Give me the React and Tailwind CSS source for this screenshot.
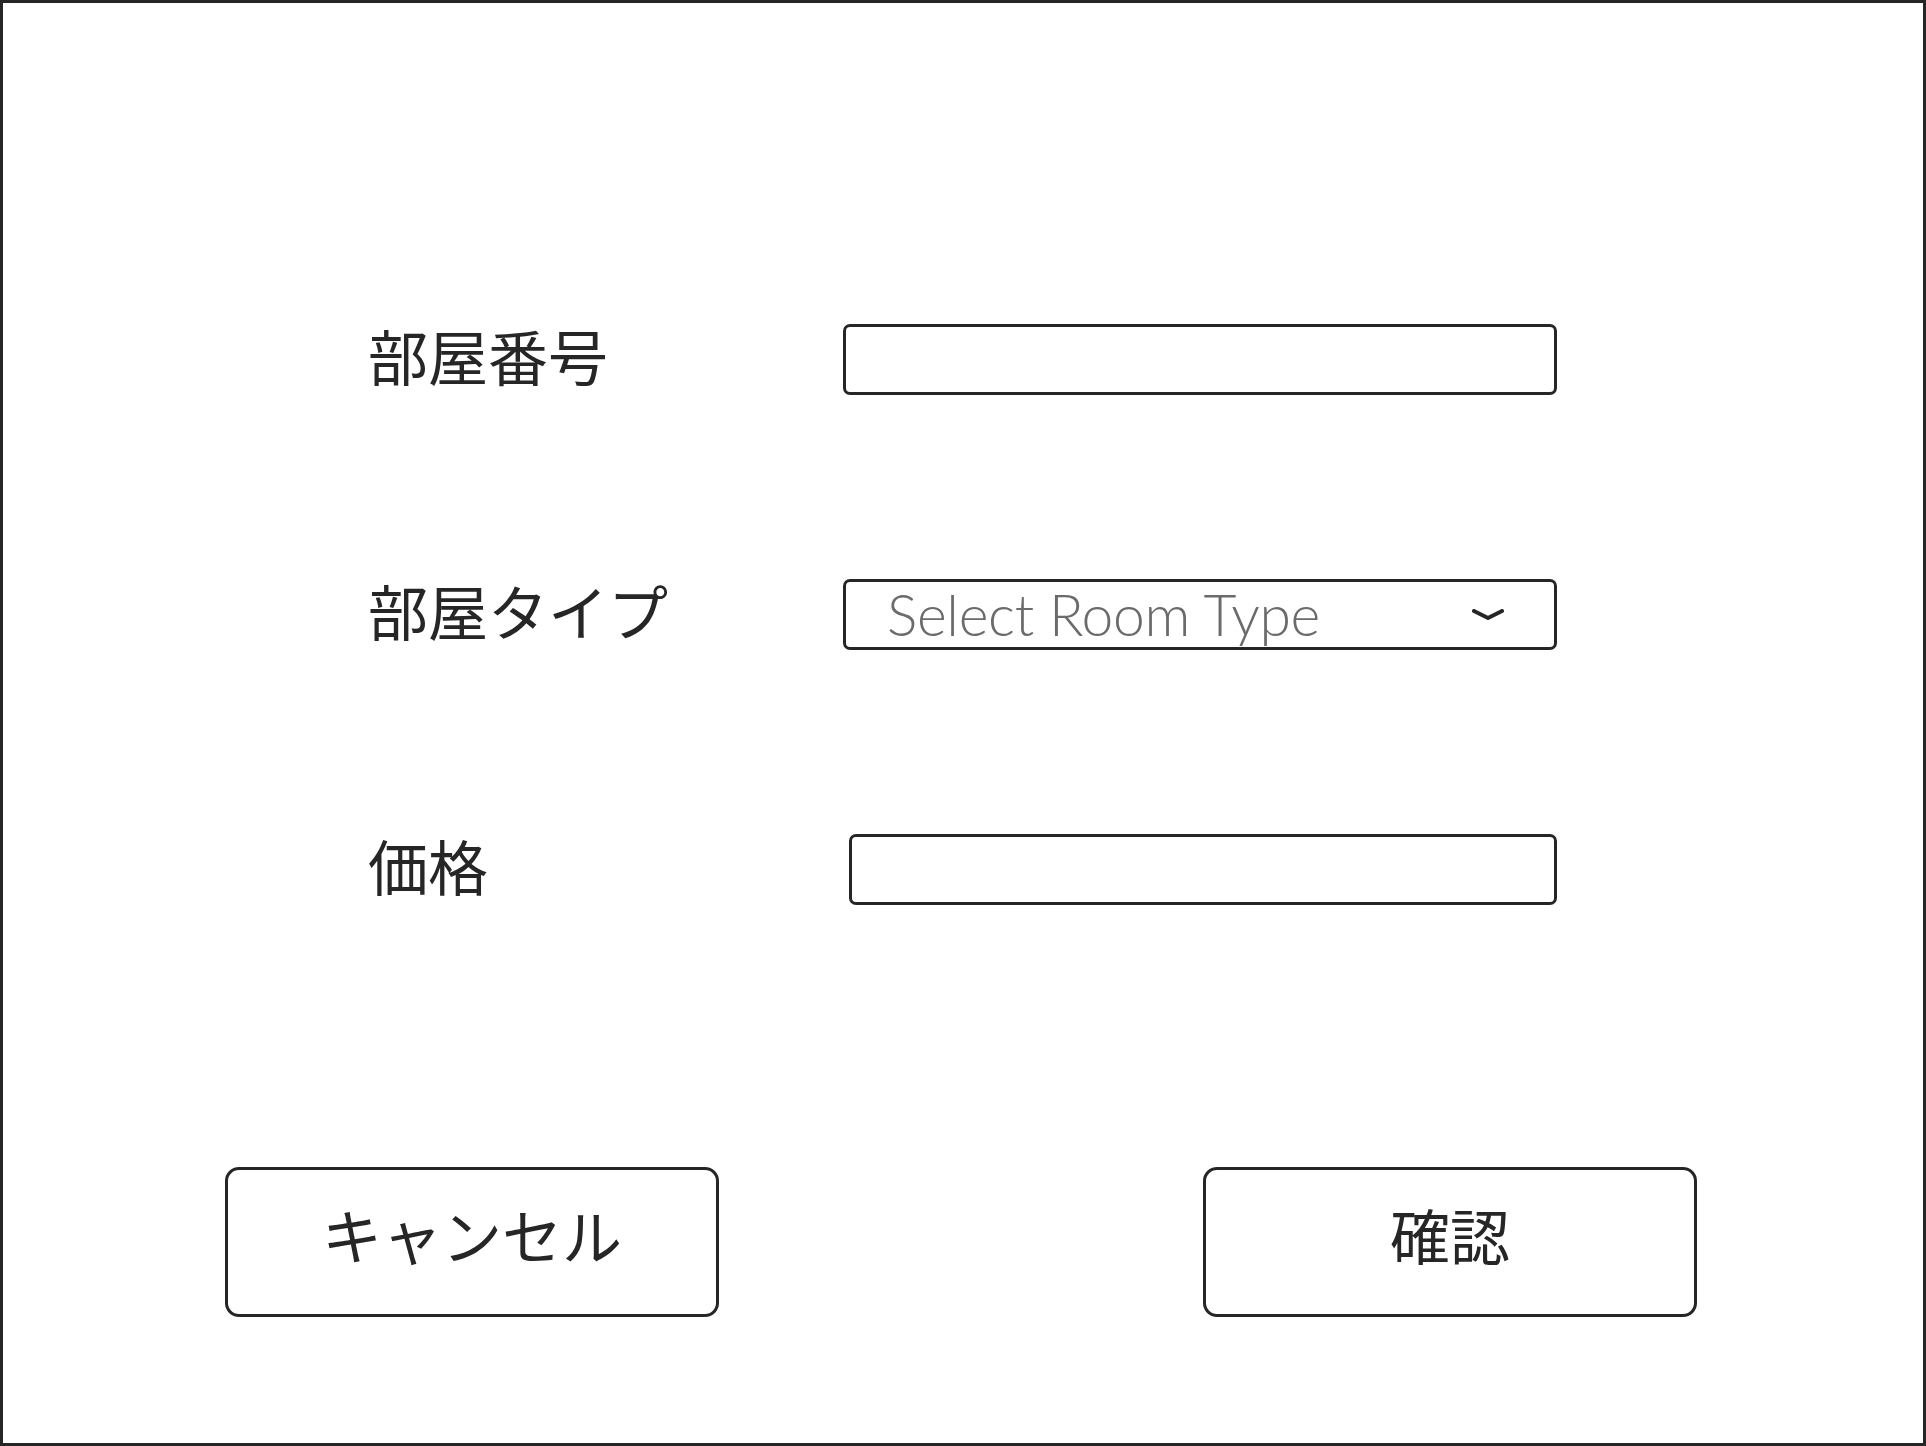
import { useState } from 'react';

const jp = { fontFamily: '"Noto Sans CJK JP", "Noto Sans", sans-serif' };

const Field = ({ label, children }) => (
  <div className="flex items-center h-[71px]">
    <div className="w-[475px] pb-[10px] text-[60px] leading-none text-[#262626]" style={jp}>
      {label}
    </div>
    {children}
  </div>
);

const App = () => {
  const [roomNo, setRoomNo] = useState('');
  const [price, setPrice] = useState('');

  return (
    <div className="w-[1926px] h-[1446px] border-[3px] border-[#262626] bg-white flex flex-col">
      <div className="pt-[321px] pl-[365px] flex flex-col gap-[184px]">
        <Field label="部屋番号">
          <input
            value={roomNo}
            onChange={(e) => setRoomNo(e.target.value)}
            className="w-[714px] h-[71px] border-[3px] border-[#262626] rounded-[7px] outline-none px-4"
          />
        </Field>

        <Field label="部屋タイプ">
          <button className="w-[714px] h-[71px] border-[3px] border-[#262626] rounded-[7px] flex items-center pl-[41px] pr-[50px] justify-between">
            <span
              className="text-[57px] font-light text-[#6b6b6b] leading-none tracking-[-0.3px]"
              style={{ fontFamily: 'Lato, "Open Sans", sans-serif' }}
            >
              Select Room Type
            </span>
            <svg width="32" height="12" viewBox="0 0 32 12" fill="none">
              <path d="M2 2 L16 9 L30 2" stroke="#262626" strokeWidth="4" strokeLinecap="round" strokeLinejoin="round" />
            </svg>
          </button>
        </Field>

        <Field label="価格">
          <input
            value={price}
            onChange={(e) => setPrice(e.target.value)}
            className="ml-[6px] w-[708px] h-[71px] border-[3px] border-[#262626] rounded-[7px] outline-none px-4"
          />
        </Field>
      </div>

      <div className="mt-[262px] pl-[222px] flex gap-[484px]">
        <button
          className="w-[494px] h-[150px] pb-[16px] border-[3px] border-[#262626] rounded-[14px] flex items-center justify-center text-[60px] leading-none text-[#262626]"
          style={jp}
        >
          キャンセル
        </button>
        <button
          className="w-[494px] h-[150px] pb-[16px] border-[3px] border-[#262626] rounded-[14px] flex items-center justify-center text-[60px] leading-none text-[#262626]"
          style={jp}
        >
          確認
        </button>
      </div>
    </div>
  );
};

export default App;
